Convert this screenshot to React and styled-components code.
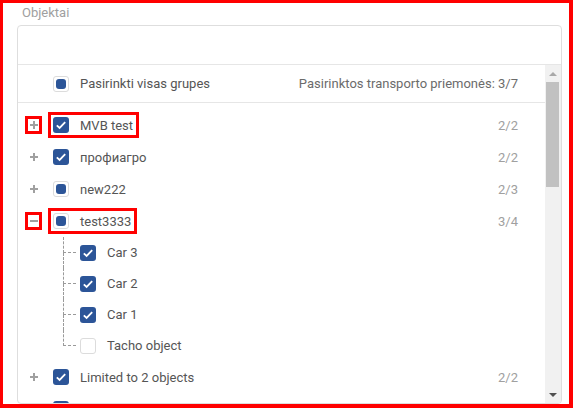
import styled, { createGlobalStyle, css } from "styled-components";

const GlobalStyle = createGlobalStyle`
  html, body {
    margin: 0;
    padding: 0;
    background: #fff;
  }
  body {
    font-family: Roboto, "Liberation Sans", sans-serif;
  }
  * {
    box-sizing: border-box;
  }
`;

const Frame = styled.div`
  width: 573px;
  height: 408px;
  border: 3px solid #ff0000;
  border-right-width: 4px;
  border-bottom-width: 4px;
  padding: 2px 7px 0 14px;
  display: flex;
  flex-direction: column;
  overflow: hidden;
`;

const FieldLabel = styled.div`
  font-size: 13px;
  line-height: 16px;
  color: #a0a0a0;
  padding-left: 5px;
  margin-bottom: 4px;
`;

const Panel = styled.div`
  flex: 1;
  min-height: 0;
  border: 1px solid #dedede;
  border-radius: 4px;
  display: flex;
  flex-direction: column;
  overflow: hidden;
`;

const SearchArea = styled.div`
  height: 39px;
  flex-shrink: 0;
  border-bottom: 1px solid #e6e6e6;
`;

const Body = styled.div`
  flex: 1;
  min-height: 0;
  display: flex;
`;

const List = styled.div`
  flex: 1;
  min-width: 0;
  overflow: hidden;
`;

const HeaderRow = styled.div`
  height: 38px;
  display: flex;
  align-items: center;
  padding: 0 27px 0 35px;
  border-bottom: 1px solid #e6e6e6;
  font-size: 13px;
  color: #555;
`;

const HeaderInfo = styled.span`
  margin-left: auto;
  color: #6b6b6b;
`;

const Rows = styled.div`
  padding-top: 6px;
`;

const Row = styled.div`
  height: ${(p) => (p.$child ? 31 : 32)}px;
  display: flex;
  align-items: center;
  padding: 0 27px 0 ${(p) => (p.$child ? 45 : 7)}px;
  font-size: 13px;
  color: #555;
`;

const Toggle = styled.span`
  width: 17px;
  height: 18px;
  margin-right: 11px;
  display: flex;
  align-items: center;
  justify-content: center;
  flex-shrink: 0;
  ${(p) =>
    p.$marked &&
    css`
      box-shadow: inset 0 0 0 3px #ff0000;
    `}
`;

const LabelGroup = styled.span`
  display: inline-flex;
  align-items: center;
  gap: 11px;
  height: 16px;
  padding-right: 1px;
  ${(p) =>
    p.$marked &&
    css`
      outline: 3px solid #ff0000;
      outline-offset: 2px;
    `}
`;

const Count = styled.span`
  margin-left: auto;
  color: #a0a0a0;
`;

const Box = styled.span`
  width: 16px;
  height: 16px;
  border-radius: 3px;
  flex-shrink: 0;
  display: flex;
  align-items: center;
  justify-content: center;
  ${(p) =>
    p.$state === "checked"
      ? css`
          background: #2c5598;
        `
      : css`
          background: #fff;
          border: 1px solid #dcdcdc;
        `}
`;

const Dot = styled.span`
  width: 10px;
  height: 10px;
  border-radius: 3px;
  background: #2c5598;
`;

const Branch = styled.span`
  width: 13px;
  align-self: stretch;
  margin-right: 4px;
  display: flex;
  flex-direction: column;
  flex-shrink: 0;
`;

const BranchTop = styled.span`
  flex: 1;
  border-left: 1px dashed #9a9a9a;
  border-bottom: 1px dashed #9a9a9a;
`;

const BranchBottom = styled.span`
  flex: 1;
  border-left: 1px ${(p) => (p.$last ? "none" : "dashed #9a9a9a")};
`;

const Scrollbar = styled.div`
  width: 16px;
  flex-shrink: 0;
  background: #f1f1f1;
  display: flex;
  flex-direction: column;
`;

const Arrow = styled.span`
  height: 17px;
  display: flex;
  align-items: center;
  justify-content: center;
  &::after {
    content: "";
    border-left: 4px solid transparent;
    border-right: 4px solid transparent;
    ${(p) =>
      p.$down
        ? css`
            border-top: 4px solid #505050;
          `
        : css`
            border-bottom: 4px solid #a8a8a8;
          `}
  }
`;

const Thumb = styled.span`
  height: 105px;
  width: 13px;
  margin-left: 1px;
  background: #c1c1c1;
`;

const Track = styled.span`
  flex: 1;
`;

const Checkbox = ({ state }) => (
  <Box $state={state}>
    {state === "checked" && (
      <svg width="16" height="16" viewBox="0 0 16 16">
        <polyline
          points="3.8,8.3 6.6,11 12.2,5.2"
          fill="none"
          stroke="#fff"
          strokeWidth="1.8"
        />
      </svg>
    )}
    {state === "partial" && <Dot />}
  </Box>
);

const ToggleIcon = ({ open }) => (
  <svg width="8" height="8" viewBox="0 0 8 8">
    <path d={open ? "M0 4h8" : "M0 4h8M4 0v8"} stroke="#a0a0a0" strokeWidth="2" />
  </svg>
);

const groups = [
  { name: "MVB test", state: "checked", count: "2/2", marked: true },
  { name: "профиагро", state: "checked", count: "2/2" },
  { name: "new222", state: "partial", count: "2/3" },
  {
    name: "test3333",
    state: "partial",
    count: "3/4",
    marked: true,
    open: true,
    children: [
      { name: "Car 3", state: "checked" },
      { name: "Car 2", state: "checked" },
      { name: "Car 1", state: "checked" },
      { name: "Tacho object", state: "empty" },
    ],
  },
  { name: "Limited to 2 objects", state: "checked", count: "2/2" },
  { name: "", state: "checked", count: "" },
];

export default function App() {
  return (
    <>
      <GlobalStyle />
      <Frame>
        <FieldLabel>Objektai</FieldLabel>
        <Panel>
          <SearchArea />
          <Body>
            <List>
              <HeaderRow>
                <LabelGroup>
                  <Checkbox state="partial" />
                  Pasirinkti visas grupes
                </LabelGroup>
                <HeaderInfo>Pasirinktos transporto priemonės: 3/7</HeaderInfo>
              </HeaderRow>
              <Rows>
                {groups.map((g, i) => (
                  <div key={i}>
                    <Row>
                      <Toggle $marked={g.marked}>
                        <ToggleIcon open={g.open} />
                      </Toggle>
                      <LabelGroup $marked={g.marked}>
                        <Checkbox state={g.state} />
                        {g.name}
                      </LabelGroup>
                      <Count>{g.count}</Count>
                    </Row>
                    {g.open &&
                      g.children.map((c, j) => (
                        <Row $child key={c.name}>
                          <Branch>
                            <BranchTop />
                            <BranchBottom $last={j === g.children.length - 1} />
                          </Branch>
                          <LabelGroup>
                            <Checkbox state={c.state} />
                            {c.name}
                          </LabelGroup>
                        </Row>
                      ))}
                  </div>
                ))}
              </Rows>
            </List>
            <Scrollbar>
              <Arrow />
              <Thumb />
              <Track />
              <Arrow $down />
            </Scrollbar>
          </Body>
        </Panel>
      </Frame>
    </>
  );
}
